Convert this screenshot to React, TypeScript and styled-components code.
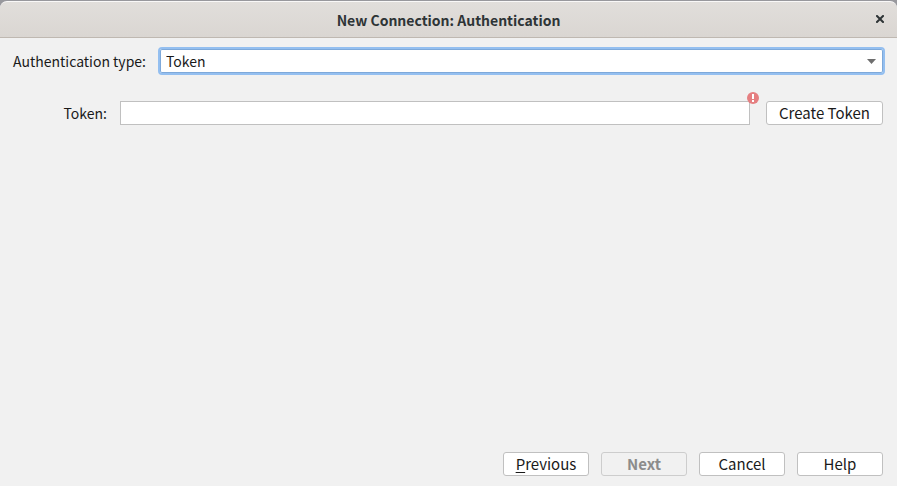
import React from "react";
import styled, { createGlobalStyle } from "styled-components";

const GlobalStyle = createGlobalStyle`
  *, *::before, *::after { box-sizing: border-box; }
  body {
    margin: 0;
    background: #98989d;
    color: #1a1a1a;
    font: 14px/22px "Noto Sans CJK SC", "Noto Sans", sans-serif;
  }
  button, input, select { font: inherit; color: inherit; margin: 0; }
`;

const Dialog = styled.main`
  display: flex;
  flex-direction: column;
  min-height: 100vh;
  padding-top: 1px;
`;

const TitleBar = styled.header`
  display: grid;
  grid-template-columns: 34px 1fr 34px;
  align-items: center;
  height: 37px;
  border-top: 1px solid #f9f8f8;
  border-bottom: 1px solid #bfb8b1;
  border-radius: 7px 7px 0 0;
  background: linear-gradient(#e1dedb, #dad6d2);
`;

const Title = styled.h1`
  grid-column: 2;
  margin: 0;
  color: #2e3436;
  font-size: 14px;
  line-height: 22px;
  font-weight: 700;
  text-align: center;
`;

const CloseButton = styled.button`
  display: flex;
  justify-content: center;
  padding: 7px 0 9px;
  border: 0;
  background: none;
`;

const Form = styled.form`
  display: flex;
  flex: 1;
  flex-direction: column;
  padding: 9px 14px 10px;
  background: #f1f1f1;
`;

const TypeRow = styled.div`
  display: grid;
  grid-template-columns: 134px 1fr;
  align-items: center;
  gap: 12px;
  margin: 0 -2px;
`;

const TokenRow = styled.div`
  display: grid;
  grid-template-columns: 93px 1fr 117px;
  align-items: center;
  column-gap: 13px;
  margin-top: 26px;
`;

const Label = styled.label`
  text-align: right;
  white-space: nowrap;
`;

const SelectFrame = styled.div`
  position: relative;
`;

const Select = styled.select`
  display: block;
  appearance: none;
  width: 100%;
  height: 28px;
  padding: 0 24px 0 6px;
  border: 2px solid #94bff0;
  border-radius: 4px;
  outline: 0;
  background: #fff;
  box-shadow: inset 0 0 0 1px #7ea9da;
`;

const Arrow = styled.svg`
  position: absolute;
  top: 12px;
  right: 9px;
  pointer-events: none;
`;

const Field = styled.div`
  position: relative;
  margin-right: 3px;
`;

const TextInput = styled.input`
  display: block;
  width: 100%;
  height: 24px;
  padding: 0 6px;
  border: 1px solid #c0c0c0;
  border-radius: 0;
  outline: 0;
  background: #fff;
`;

const ErrorBadge = styled.svg`
  position: absolute;
  top: -9px;
  right: -9px;
`;

const Button = styled.button`
  height: 24px;
  padding: 0;
  border: 1px solid #c0c0c0;
  border-radius: 3px;
  background: #fff;
  font-size: 15px;
  line-height: 22px;
  white-space: nowrap;

  &:disabled {
    border-color: #cdcdcd;
    background: #f1f1f1;
    color: #8c8c8c;
    font-weight: 700;
  }
`;

const Mnemonic = styled.span`
  text-decoration: underline;
  text-decoration-thickness: 1px;
  text-underline-offset: 2px;
`;

const Actions = styled.footer`
  display: grid;
  grid-template-columns: repeat(4, 86px);
  justify-content: end;
  gap: 12px;
  margin-top: auto;
`;

export default function App() {
  return (
    <>
      <GlobalStyle />
      <Dialog>
        <TitleBar>
          <Title>New Connection: Authentication</Title>
          <CloseButton type="button" aria-label="Close">
            <svg width="8" height="8" viewBox="0 0 8 8" aria-hidden="true">
              <path d="M1 1L7 7M7 1L1 7" stroke="#2e3436" strokeWidth="2" strokeLinecap="square" />
            </svg>
          </CloseButton>
        </TitleBar>
        <Form onSubmit={(event: React.FormEvent) => event.preventDefault()}>
          <TypeRow>
            <Label htmlFor="auth-type">Authentication type:</Label>
            <SelectFrame>
              <Select id="auth-type" defaultValue="token">
                <option value="token">Token</option>
              </Select>
              <Arrow width="9" height="5" viewBox="0 0 9 5" aria-hidden="true">
                <path d="M0 0H9L4.5 5Z" fill="#6e6e6e" />
              </Arrow>
            </SelectFrame>
          </TypeRow>
          <TokenRow>
            <Label htmlFor="token">Token:</Label>
            <Field>
              <TextInput id="token" type="text" aria-invalid="true" />
              <ErrorBadge width="12" height="12" viewBox="0 0 12 12" aria-hidden="true">
                <circle cx="6" cy="6" r="6" fill="#e57f81" />
                <path d="M5 2H7V7H5ZM5 8H7V10H5Z" fill="#fff" />
              </ErrorBadge>
            </Field>
            <Button type="button">Create Token</Button>
          </TokenRow>
          <Actions>
            <Button type="button"><Mnemonic>P</Mnemonic>revious</Button>
            <Button type="submit" disabled>Next</Button>
            <Button type="button">Cancel</Button>
            <Button type="button">Help</Button>
          </Actions>
        </Form>
      </Dialog>
    </>
  );
}
